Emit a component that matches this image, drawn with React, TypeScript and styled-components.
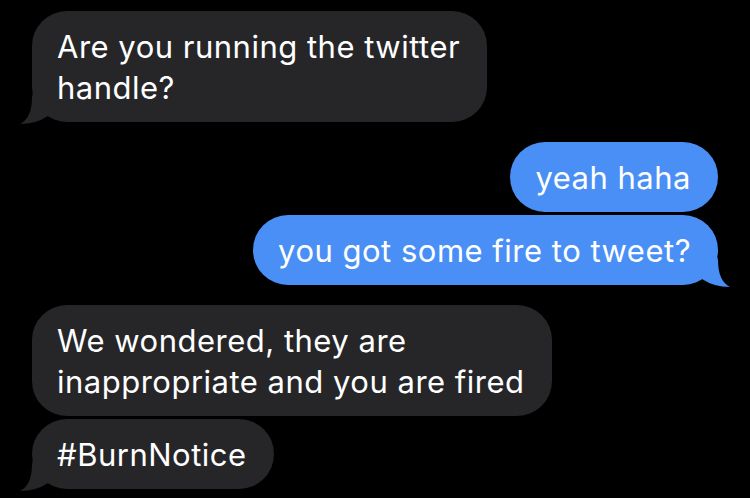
import React from "react";
import styled, { createGlobalStyle } from "styled-components";

const Global = createGlobalStyle`
  html, body { margin: 0; padding: 0; background: #000; }
  body { width: 750px; height: 498px; overflow: hidden; }
`;

const GRAY = "#262629";
const BLUE = "#4a8ff5";

const Thread = styled.div`
  display: flex;
  flex-direction: column;
  padding: 11px 32px 0 32px;
  font-family: Inter, "Noto Sans", sans-serif;
`;

const Row = styled.div<{ $sent?: boolean; $gap: number }>`
  display: flex;
  justify-content: ${(p) => (p.$sent ? "flex-end" : "flex-start")};
  margin-top: ${(p) => p.$gap}px;
`;

const Bubble = styled.div<{ $sent?: boolean }>`
  position: relative;
  background: ${(p) => (p.$sent ? BLUE : GRAY)};
  color: #fff;
  font-size: 31px;
  line-height: 41px;
  letter-spacing: 0.5px;
  padding: 14.5px 27px 14.5px 25px;
  border-radius: 35px;
  white-space: nowrap;
`;

const Tail = styled.svg<{ $sent?: boolean }>`
  position: absolute;
  bottom: -3px;
  width: 40px;
  height: 36px;
  ${(p) => (p.$sent ? "right: -14px; transform: scaleX(-1);" : "left: -14px;")}
`;

function BubbleTail({ sent }: { sent?: boolean }) {
  return (
    <Tail $sent={sent} viewBox="0 0 40 36">
      <path
        d="M16 0 L14 8 C14 22 10 31 2 35 Q18 35 30 27 L30 0 Z"
        fill={sent ? BLUE : GRAY}
      />
    </Tail>
  );
}

function Msg({
  sent,
  tail,
  gap,
  lines,
}: {
  sent?: boolean;
  tail?: boolean;
  gap: number;
  lines: string[];
}) {
  return (
    <Row $sent={sent} $gap={gap}>
      <Bubble $sent={sent}>
        {tail && <BubbleTail sent={sent} />}
        {lines.map((l, i) => (
          <React.Fragment key={i}>
            {i > 0 && <br />}
            {l}
          </React.Fragment>
        ))}
      </Bubble>
    </Row>
  );
}

export default function App() {
  return (
    <>
      <Global />
      <Thread>
        <Msg gap={0} tail lines={["Are you running the twitter", "handle?"]} />
        <Msg gap={20} sent lines={["yeah haha"]} />
        <Msg gap={3} sent tail lines={["you got some fire to tweet?"]} />
        <Msg gap={20} lines={["We wondered, they are", "inappropriate and you are fired"]} />
        <Msg gap={3} tail lines={["#BurnNotice"]} />
      </Thread>
    </>
  );
}
